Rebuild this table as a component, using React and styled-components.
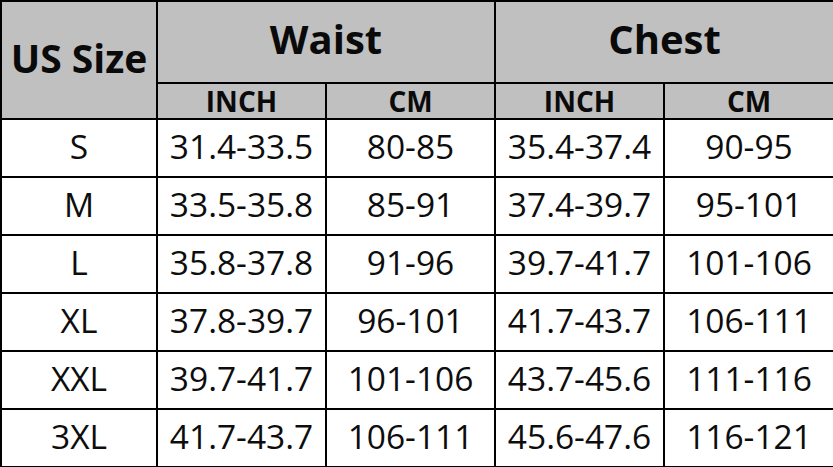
import React from "react";
import styled, { createGlobalStyle } from "styled-components";

const Global = createGlobalStyle`
  html, body { margin: 0; padding: 0; background: #fff; }
  body { font-family: "Open Sans", "Noto Sans", sans-serif; color: #111; }
`;

const Table = styled.table`
  width: 833px;
  table-layout: fixed;
  border-collapse: collapse;
  font-family: "Open Sans", "Noto Sans", sans-serif;
`;

const Cell = styled.td`
  border: 2px solid #000;
  padding: 0;
  text-align: center;
  vertical-align: middle;
  white-space: nowrap;
  overflow: hidden;
  line-height: 1;
  color: #0d0d0d;
`;

const Head = styled(Cell).attrs({ as: "th" })`
  background: #c0c0c0;
  font-weight: 700;
  font-size: ${(p) => p.$size}px;
  padding-bottom: ${(p) => p.$lift || 0}px;
  color: #0a0a0a;
`;

const Data = styled(Cell)`
  font-size: 33.5px;
  font-weight: 400;
  padding-bottom: 2px;
`;

const Row = styled.tr`
  height: ${(p) => p.$h}px;
`;

const rows = [
  ["S", "31.4-33.5", "80-85", "35.4-37.4", "90-95"],
  ["M", "33.5-35.8", "85-91", "37.4-39.7", "95-101"],
  ["L", "35.8-37.8", "91-96", "39.7-41.7", "101-106"],
  ["XL", "37.8-39.7", "96-101", "41.7-43.7", "106-111"],
  ["XXL", "39.7-41.7", "101-106", "43.7-45.6", "111-116"],
  ["3XL", "41.7-43.7", "106-111", "45.6-47.6", "116-121"],
];

export default function App() {
  return (
    <>
      <Global />
      <Table>
        <colgroup>
          <col style={{ width: 156 }} />
          <col style={{ width: 169 }} />
          <col style={{ width: 169 }} />
          <col style={{ width: 169 }} />
          <col style={{ width: 170 }} />
        </colgroup>
        <thead>
          <Row $h={82}>
            <Head rowSpan={2} $size={39} $lift={6}>US Size</Head>
            <Head colSpan={2} $size={40} $lift={6}>Waist</Head>
            <Head colSpan={2} $size={40} $lift={6}>Chest</Head>
          </Row>
          <Row $h={36}>
            <Head $size={28}>INCH</Head>
            <Head $size={28}>CM</Head>
            <Head $size={28}>INCH</Head>
            <Head $size={28}>CM</Head>
          </Row>
        </thead>
        <tbody>
          {rows.map((r) => (
            <Row key={r[0]} $h={58}>
              {r.map((v, i) => (
                <Data key={i}>{v}</Data>
              ))}
            </Row>
          ))}
        </tbody>
      </Table>
    </>
  );
}
